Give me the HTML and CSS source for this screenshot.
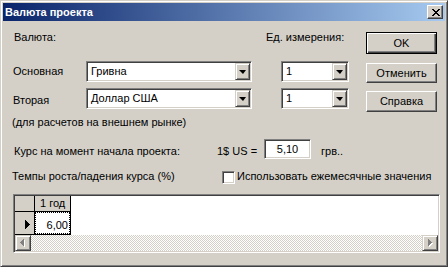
FILE: index.html
```html
<!DOCTYPE html>
<html lang="ru">
<head>
    <meta charset="UTF-8">
    <title>Валюта проекта</title>
    <link rel="stylesheet" href="styles.css">
</head>
<body>

<div class="window">

    <!-- Title bar -->
    <div class="titlebar">
        <span class="title">Валюта проекта</span>
        <span class="close">
            <svg width="8" height="7" viewBox="0 0 8 7" shape-rendering="crispEdges">
                <path d="M0 0h2v1H0zM6 0h2v1H6zM1 1h2v1H1zM5 1h2v1H5zM2 2h4v1H2zM3 3h2v1H3zM2 4h4v1H2zM1 5h2v1H1zM5 5h2v1H5zM0 6h2v1H0zM6 6h2v1H6z" fill="#000"/>
            </svg>
        </span>
    </div>

    <div class="dialog">

        <!-- Currencies and buttons -->
        <div class="top">
            <div class="lbl head">Валюта:</div>
            <div class="lbl head unit-head">Ед. измерения:</div>
            <div class="btn default">OK</div>

            <div class="lbl main-lbl">Основная</div>
            <div class="combo main-combo"><span class="combo-text">Гривна</span><span class="drop"><i></i></span></div>
            <div class="combo unit-combo"><span class="combo-text">1</span><span class="drop"><i></i></span></div>
            <div class="btn cancel">Отменить</div>

            <div class="lbl main-lbl second">Вторая</div>
            <div class="combo main-combo"><span class="combo-text">Доллар США</span><span class="drop"><i></i></span></div>
            <div class="combo unit-combo"><span class="combo-text">1</span><span class="drop"><i></i></span></div>
            <div class="btn help">Справка</div>
        </div>

        <div class="note">(для расчетов на внешнем рынке)</div>

        <!-- Exchange rate -->
        <div class="rate-row">
            <span class="rate-lbl">Курс на момент начала проекта:</span>
            <span class="usd-lbl">1$ US =</span>
            <span class="edit">5,10</span>
            <span class="uah-lbl">грв..</span>
        </div>

        <div class="growth-row">
            <span class="growth-lbl">Темпы роста/падения курса (%)</span>
            <input type="checkbox" class="check">
            <span class="check-lbl">Использовать ежемесячные значения</span>
        </div>

        <!-- String grid -->
        <div class="grid-box">
            <div class="grid-cells">
                <div class="grid-row head-row">
                    <div class="cell fixed ind"></div>
                    <div class="cell fixed year">1 год</div>
                </div>
                <div class="grid-row data-row">
                    <div class="cell fixed ind">
                        <svg width="5" height="9" viewBox="0 0 5 9" shape-rendering="crispEdges"><path d="M0 0L5 4.5L0 9z" fill="#000"/></svg>
                    </div>
                    <div class="cell value"><span class="focus">6,00</span></div>
                </div>
            </div>
            <div class="hscroll">
                <span class="sbtn">
                    <svg width="6" height="8" viewBox="0 0 6 8" shape-rendering="crispEdges">
                        <path d="M5 1v7H4v-1H3v-1H2v-1H1v-1h1v-1h1v-1h1v-1z" fill="#fff"/>
                        <path d="M4 0v7H3v-1H2v-1H1v-1H0v-1h1v-1h1v-1h1v-1z" fill="#808080"/>
                    </svg>
                </span>
                <span class="sbtn right">
                    <svg width="6" height="8" viewBox="0 0 6 8" shape-rendering="crispEdges">
                        <path d="M2 1v7h1v-1h1v-1h1v-1h1v-1h-1v-1h-1v-1h-1v-1z" fill="#fff"/>
                        <path d="M1 0v7h1v-1h1v-1h1v-1h1v-1h-1v-1h-1v-1h-1v-1z" fill="#808080"/>
                    </svg>
                </span>
            </div>
        </div>

    </div>
</div>

</body>
</html>
```

FILE: styles.css
```css
* {
    box-sizing: border-box;
}
body {
    margin: 0;
    font: 11px/13px "Liberation Sans", Arial, sans-serif;
    color: #000;
    background: #d4d0c8;
}
.window {
    width: 448px;
    height: 267px;
    background: #d4d0c8;
    border: 1px solid;
    border-color: #d4d0c8 #404040 #404040 #d4d0c8;
    box-shadow: inset 1px 1px #fff, inset -1px -1px #808080;
    padding: 2px;
}
.titlebar {
    height: 18px;
    display: flex;
    align-items: center;
    justify-content: space-between;
    padding: 0 2px;
    background: linear-gradient(to right, #0a246a, #a6caf0);
    color: #fff;
    font-weight: bold;
}
.close {
    width: 16px;
    height: 14px;
    display: flex;
    align-items: center;
    justify-content: center;
    background: #d4d0c8;
    border: 1px solid;
    border-color: #fff #404040 #404040 #fff;
    box-shadow: inset -1px -1px #808080;
    padding-left: 1px;
}

.dialog {
    padding: 11px 0 0 9px;
}

/* top block */
.top {
    display: grid;
    grid-template-columns: 74px 166px 14px 83px 17px 71px;
    grid-template-rows: 22px 21px 21px;
    row-gap: 7px;
}
.top > :nth-child(n+8) {
    margin-top: -1px;
}
.lbl {
    align-self: center;
}
.head {
    align-self: start;
    margin-top: -1px;
    padding-left: 2px;
}
.unit-head {
    grid-column: 4 / 6;
    padding-left: 0;
}
.main-lbl {
    padding-left: 1px;
}
.second {
    padding-top: 3px;
}
.main-combo {
    grid-column: 2;
}
.unit-combo {
    grid-column: 4;
    margin-left: 15px;
}
.btn {
    grid-column: 6;
    display: flex;
    align-items: center;
    justify-content: center;
    height: 21px;
    border: 1px solid;
    border-color: #fff #404040 #404040 #fff;
    box-shadow: inset -1px -1px #808080;
}
.btn.default {
    height: 22px;
    border-color: #000;
    box-shadow: inset 1px 1px #fff, inset -1px -1px #404040, inset -2px -2px #808080;
}
.btn.cancel {
    margin-top: 2px;
    height: 20px;
}
.btn.help {
    margin-top: 2px;
}

.combo {
    display: flex;
    height: 21px;
    background: #fff;
    border: 1px solid;
    border-color: #808080 #fff #fff #808080;
    box-shadow: inset 1px 1px #404040, inset -1px -1px #d4d0c8;
    padding: 1px;
}
.combo-text {
    flex: 1;
    padding: 2px 0 0 3px;
}
.drop {
    width: 15px;
    display: flex;
    align-items: center;
    justify-content: center;
    background: #d4d0c8;
    border: 1px solid;
    border-color: #d4d0c8 #404040 #404040 #d4d0c8;
    box-shadow: inset 1px 1px #fff, inset -1px -1px #808080;
}
.drop i {
    width: 0;
    height: 0;
    border-left: 4px solid transparent;
    border-right: 3px solid transparent;
    border-top: 4px solid #000;
}

.note {
    margin-top: 6px;
}

/* exchange rate */
.rate-row {
    display: flex;
    align-items: center;
    margin-top: 10px;
    margin-left: 2px;
}
.rate-lbl, .usd-lbl, .uah-lbl {
    padding-top: 4px;
}
.rate-lbl {
    width: 203px;
}
.usd-lbl {
    width: 47px;
}
.edit {
    width: 47px;
    height: 20px;
    padding-top: 3px;
    text-align: center;
    background: #fff;
    border: 1px solid;
    border-color: #808080 #fff #fff #808080;
    box-shadow: inset 1px 1px #404040, inset -1px -1px #d4d0c8;
}
.uah-lbl {
    margin-left: 10px;
}

.growth-row {
    display: flex;
    align-items: center;
    height: 13px;
    margin-top: 12px;
}
.growth-lbl {
    width: 210px;
    margin-top: -2px;
}
.check {
    appearance: none;
    margin: 0;
    width: 13px;
    height: 13px;
    background: #fff;
    border: 1px solid;
    border-color: #808080 #fff #fff #808080;
    box-shadow: inset 1px 1px #404040, inset -1px -1px #d4d0c8;
}
.check-lbl {
    margin-left: 2px;
    margin-top: -2px;
}

/* string grid */
.grid-box {
    width: 427px;
    margin: 10px 0 0 1px;
    background: #fff;
    border: 1px solid;
    border-color: #808080 #fff #fff #808080;
    box-shadow: inset 1px 1px #404040, inset -1px -1px #d4d0c8;
    padding: 1px;
}
.grid-row {
    display: flex;
}
.head-row {
    height: 16px;
}
.data-row {
    height: 23px;
}
.cell {
    border-right: 1px solid #000;
    border-bottom: 1px solid #000;
}
.fixed {
    background: #d4d0c8;
}
.ind {
    width: 20px;
    display: flex;
    align-items: center;
    justify-content: flex-end;
    padding: 2px 4px 0 0;
}
.year {
    width: 36px;
    padding: 1px 0 0 5px;
}
.value {
    width: 36px;
    display: flex;
}
.focus {
    flex: 1;
    border: 1px dotted #000;
    text-align: right;
    padding: 6px 1px 0 0;
}
.hscroll {
    display: flex;
    justify-content: space-between;
    height: 16px;
    background: conic-gradient(#fff 25%, #d4d0c8 0 50%, #fff 0 75%, #d4d0c8 0);
    background-size: 2px 2px;
}
.sbtn {
    width: 16px;
    height: 16px;
    display: flex;
    align-items: center;
    justify-content: center;
    background: #d4d0c8;
    border: 1px solid;
    border-color: #d4d0c8 #404040 #404040 #d4d0c8;
    box-shadow: inset 1px 1px #fff, inset -1px -1px #808080;
}
```
